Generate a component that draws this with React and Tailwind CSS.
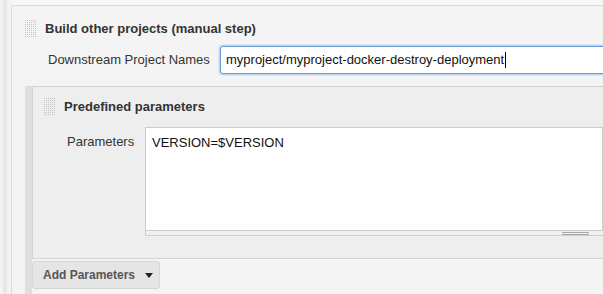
import React from "react";

function Grip({ cols = 6, rows = 9 }) {
  const dots = [];
  for (let r = 0; r < rows; r++) {
    for (let c = 0; c < cols; c++) {
      dots.push(<rect key={`${r}-${c}`} x={c * 2} y={r * 2} width="1" height="1" fill="#c4c4c4" />);
    }
  }
  return (
    <svg width={cols * 2} height={rows * 2} className="shrink-0">
      {dots}
    </svg>
  );
}

export default function App() {
  return (
    <div className="w-[603px] h-[294px] overflow-hidden flex bg-[#f7f7f7] font-['Liberation_Sans',Arial,sans-serif] text-[13px] text-[#333]">
      {/* left gutter */}
      <div className="w-[3px] shrink-0 bg-[#f2f2f2]" />
      <div className="w-[4px] shrink-0 bg-[#e7e7e7]" />
      <div className="w-[4px] shrink-0 bg-[#f3f3f3]" />

      {/* Build other projects section */}
      <div className="flex-1 min-w-0 mt-[5px] border-l border-t border-[#dcdcdc] bg-[#f4f4f4] pl-[13px] flex flex-col">
        <div className="flex items-center gap-[8px] pt-[14px]">
          <Grip />
          <span className="font-bold text-[13px] leading-[18px] text-[#333] whitespace-nowrap">
            Build other projects (manual step)
          </span>
        </div>

        <div className="flex items-center mt-[8px]">
          <span className="w-[195px] shrink-0 pl-[23px] leading-[16px] text-[#333] whitespace-nowrap">
            Downstream Project Names
          </span>
          <div className="w-[400px] shrink-0 h-[28px] flex items-center pl-[5px] bg-white border border-[#6b9fd6] rounded-[3px] shadow-[0_0_2px_1px_#a9c8ea] text-[#111] whitespace-nowrap">
            <span>myproject/myproject-docker-destroy-deployment</span>
            <span className="w-[1px] h-[16px] bg-black ml-[1px]" />
          </div>
        </div>

        {/* Predefined parameters */}
        <div className="flex flex-1 mt-[12px]">
          <div className="w-[7px] shrink-0 bg-[#dedede]" />
          <div className="flex-1 min-w-0 flex flex-col">
            <div className="border-l border-t border-b border-[#d4d4d4] bg-[#eeeeee] pl-[11px] pt-[11px] pb-[22px]">
              <div className="flex items-center gap-[8px]">
                <Grip />
                <span className="font-bold leading-[18px] text-[#333] whitespace-nowrap">
                  Predefined parameters
                </span>
              </div>
              <div className="flex mt-[11px]">
                <span className="w-[101px] shrink-0 pl-[23px] pt-[7px] leading-[16px] text-[#333]">
                  Parameters
                </span>
                <div className="flex-1 flex flex-col">
                  <div className="h-[104px] bg-white border border-[#cccccc] pl-[6px] pt-[7px] leading-[16px] text-[#111] whitespace-nowrap">
                    VERSION=$VERSION
                  </div>
                  <div className="h-[5px] border-b border-l border-[#cfcfcf] bg-[#f0f0f0] flex justify-end pr-[14px] pt-[1px]">
                    <div className="w-[27px] h-[3px] border-t border-b border-[#a8a8a8]" />
                  </div>
                </div>
              </div>
            </div>

            <div className="mt-[2px]">
              <button className="h-[28px] w-[128px] flex items-center pl-[10px] gap-[10px] bg-[#e5e5e5] border border-[#d6d6d6] rounded-[3px] font-bold text-[12px] text-[#555]">
                <span className="whitespace-nowrap">Add Parameters</span>
                <svg width="8" height="5" viewBox="0 0 8 5" className="mt-[1px]">
                  <path d="M0 0H8L4 5Z" fill="#222" />
                </svg>
              </button>
            </div>
          </div>
        </div>
      </div>
    </div>
  );
}
